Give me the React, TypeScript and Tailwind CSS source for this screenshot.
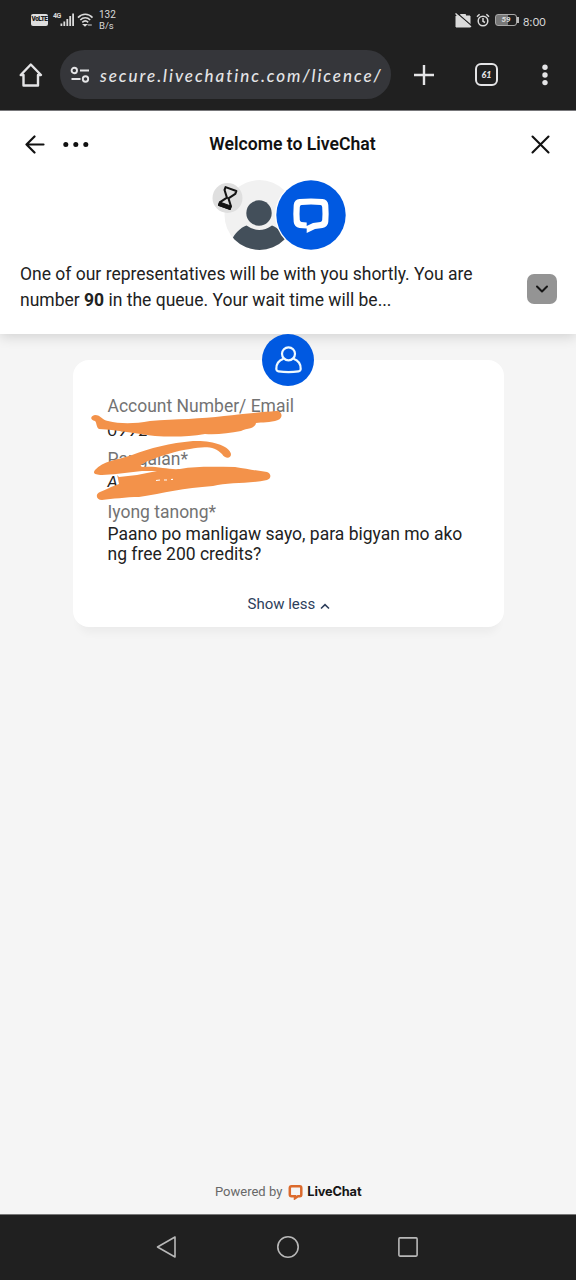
function StatusBar() {
  return (
    <div className="flex h-10 items-center justify-between pl-[31px] pr-[30px] text-[#dadada]">
      <div className="flex h-full items-center">
        <span className="flex h-[12px] w-[17px] shrink-0 items-center justify-center rounded-[2px] bg-[#dedede] text-[6.5px] font-black tracking-[-0.5px] text-[#202020]">
          VoLTE
        </span>
        <span className="mb-[8px] ml-[5px] w-[8px] text-[7px] font-bold leading-none tracking-[-0.5px]">4G</span>
        <svg className="-ml-[1px]" width="15" height="14" viewBox="0 0 15 14" fill="currentColor">
          <rect x="0.5" y="10.5" width="1.8" height="2.5" />
          <rect x="3.4" y="8.5" width="1.8" height="4.5" />
          <rect x="6.4" y="6" width="1.8" height="7" />
          <rect x="9.3" y="3" width="1.8" height="10" />
          <rect x="12.2" y="0.5" width="1.8" height="12.5" />
        </svg>
        <svg className="ml-[2px]" width="17" height="14" viewBox="0 0 17 14" fill="none" stroke="currentColor" strokeWidth="1.6">
          <path d="M1 4.600C5 .2 11.500 .2 15.500 4.600" />
          <path d="M3.300 7C6.200 4 10.300 4 13.200 7" />
          <path d="M5.300 9.300C7.200 7.500 9.300 7.500 11.200 9.300" />
          <path d="M6.500 11.500h3l-1.500 1.500zM10.800 12h4" strokeWidth="1.200" />
        </svg>
        <div className="ml-[5px] text-[10px] leading-[11px]">
          <div>132</div>
          <div className="text-[9.5px]">B/s</div>
        </div>
      </div>
      <div className="flex items-center">
        <svg width="17" height="15" viewBox="0 0 17 15">
          <path d="M5.500 3V1.500h5V3M1 3h14v11H1z" fill="currentColor" stroke="currentColor" strokeWidth="1" />
          <path d="M2.500 .5l14.500 12.500" stroke="#202020" strokeWidth="1.300" />
          <path d="M.5 .5l15.500 13.500" stroke="currentColor" strokeWidth="1.400" />
        </svg>
        <svg className="ml-[4px]" width="15" height="15" viewBox="0 0 15 15" fill="none" stroke="currentColor" strokeWidth="1.500">
          <circle cx="7" cy="8" r="4.800" />
          <path d="M7 5v3.300l2 1.200M1 3.800l2.600-2.500M13 3.800l-2.600-2.500" />
        </svg>
        <div className="ml-[4px] flex items-center">
          <div className="flex h-[12px] w-[22px] items-center justify-center rounded-[3px] border border-[#a8a8a8] bg-linear-to-r from-[#777] from-58% to-[#202020] to-58% text-[8px] font-bold italic leading-none">
            59
          </div>
          <div className="h-[6px] w-[2px] bg-[#bbb]" />
        </div>
        <span className="ml-[4px] pt-[2px] font-['Lato'] text-[11px] leading-none tracking-[0.3px]">8:00</span>
      </div>
    </div>
  );
}

function BrowserBar() {
  return (
    <div className="flex h-[70px] items-center pb-[1px] pl-[19px] text-[#e4e4e6]">
      <svg width="24" height="26" viewBox="0 0 24 26" fill="none" stroke="currentColor" strokeWidth="2.400" strokeLinejoin="round" strokeLinecap="round">
        <path d="M1.700 13L11.800 2.500L22 13H19v10.500H4.500V13z" />
      </svg>
      <div className="ml-[17px] flex h-[49px] w-[331px] items-center rounded-full bg-[#35363a] pl-[10px]">
        <svg width="21" height="18" viewBox="0 0 21 18" fill="none" stroke="currentColor" strokeWidth="1.900">
          <circle cx="4.300" cy="4.500" r="2.700" />
          <path d="M10 4.500h9M1.500 13h9" />
          <circle cx="15.500" cy="13" r="2.700" />
        </svg>
        <span className="ml-[9px] whitespace-nowrap pt-[2px] font-['Lato'] text-[17px] font-medium italic leading-6 tracking-[1.950px]">
          secure.livechatinc.com/licence/
        </span>
      </div>
      <svg className="ml-[22px]" width="22" height="22" viewBox="0 0 22 22" stroke="currentColor" strokeWidth="2.400">
        <path d="M11 1v20M1 11h20" />
      </svg>
      <div className="ml-[40px] flex h-[23px] w-[23px] items-center justify-center rounded-[6px] border-[2.4px] border-[#e4e4e6] font-['Lato'] text-[9px] font-black italic leading-none">
        61
      </div>
      <svg className="ml-[44px]" width="6" height="22" viewBox="0 0 6 22" fill="currentColor">
        <circle cx="3" cy="3.200" r="2.700" />
        <circle cx="3" cy="11" r="2.700" />
        <circle cx="3" cy="18.600" r="2.700" />
      </svg>
    </div>
  );
}

function Avatars() {
  return (
    <svg width="136" height="72" viewBox="0 0 136 72">
      <clipPath id="agent">
        <circle cx="47.500" cy="35" r="35" />
      </clipPath>
      <g clipPath="url(#agent)">
        <rect width="100" height="72" fill="#f1f1f1" />
        <circle cx="47" cy="33" r="12.700" fill="#434f5a" />
        <path d="M19 61C23 53 28 48 34.500 45.500Q47 54.500 60 45.500C66 47.500 71 53 75 61V72H19z" fill="#434f5a" />
      </g>
      <circle cx="15.500" cy="18" r="15" fill="#dfdfdf" />
      <g transform="translate(15.700 18) rotate(20)" fill="none" stroke="#141414" strokeWidth="2.100" strokeLinejoin="round">
        <path d="M-5.700-9.500H5.700V-6.500L.8 0L5.700 6.500V9.500H-5.700V6.500L-.8 0L-5.700-6.500z" />
        <path d="M-6.200 6.500H6.200V10H-6.200z" fill="#141414" strokeWidth="1" />
      </g>
      <circle cx="99" cy="35" r="36" fill="#fff" />
      <circle cx="99" cy="35" r="34.700" fill="#0059e1" />
      <path
        fillRule="evenodd"
        fill="#fff"
        d="M87.500 19Q99 18 110.500 19Q115.700 19.500 116.300 25Q117 33.500 116.300 42Q115.700 46.800 110.500 48L103 49L94.700 53V48.500L87.500 48Q82.300 47 81.700 42Q81 33.500 81.700 25Q82.300 19.500 87.500 19zM89.500 25Q99 24.200 108.500 25Q110 25.200 110.200 27Q110.700 33.500 110.200 40Q110 41.700 108.500 42L101 43L94.700 46V42.500L89.500 42Q88 41.700 87.800 40Q87.300 33.500 87.800 27Q88 25.200 89.500 25z"
      />
    </svg>
  );
}

function ChatHeader() {
  return (
    <header className="relative h-[224px] border-t border-[#77777a] bg-white shadow-[0_3px_12px_rgba(0,0,0,0.14)]">
      <div className="flex h-[66px] items-center pl-[25px] pr-[26px] text-[#111]">
        <svg width="20" height="20" viewBox="0 0 20 20" fill="none" stroke="currentColor" strokeWidth="2.200" strokeLinecap="round" strokeLinejoin="round">
          <path d="M18.500 10.500H1.500M9.500 2.500L1.500 10.500l8 8" />
        </svg>
        <svg className="ml-[18px]" width="26" height="6" viewBox="0 0 26 6" fill="currentColor">
          <circle cx="2.800" cy="3.500" r="2.500" />
          <circle cx="12.800" cy="3.500" r="2.500" />
          <circle cx="22.800" cy="3.500" r="2.500" />
        </svg>
        <h1 className="flex-1 pl-[50px] pr-[85px] text-center">
          <span className="whitespace-nowrap text-[17.6px] font-semibold leading-6">Welcome to LiveChat</span>
        </h1>
        <svg width="19" height="19" viewBox="0 0 19 19" stroke="currentColor" strokeWidth="2.100" strokeLinecap="round">
          <path d="M1.500 1.500l16 16M17.500 1.500l-16 16" />
        </svg>
      </div>
      <div className="ml-[212px] mt-[3px] h-[72px]">
        <Avatars />
      </div>
      <div className="mt-[9px] flex items-start justify-between pl-5 pr-[19px]">
        <p className="w-[480px] text-[17.5px] leading-[26px] text-[#222]">
          One of our representatives will be with you shortly. You are
          <br />
          number <b>90</b> in the queue. Your wait time will be...
        </p>
        <button className="mt-[13px] flex h-[30px] w-[30px] items-center justify-center rounded-[7px] bg-[#949494]">
          <svg width="14" height="9" viewBox="0 0 14 9" fill="none" stroke="#151515" strokeWidth="2" strokeLinecap="round" strokeLinejoin="round">
            <path d="M2 1.500l5 5 5-5" />
          </svg>
        </button>
      </div>
    </header>
  );
}

// Hand-drawn marker strokes that hide the private answers
function Redaction() {
  return (
    <svg className="absolute left-[13px] top-[45px]" width="200" height="100" viewBox="86 405 200 100" fill="#f3924a">
      <path d="M95 415C101 415 102 420 108 421C120 424 134 424 150 421C176 419 202 419 224 416C242 414 262 412 276 411C283 411 283 418 278 420C270 423 262 422 256 423C255 429 247 428 241 431C229 433 217 435 205 434C188 437 171 437 155 436C139 434 119 430 99 429C96 427 97 423 95 421C90 420 90 416 95 415z" />
      <path d="M95 470C103 461 117 460 132 455C150 448 170 443 193 441C212 440 230 446 231 454C231 459 225 459 222 454C215 446 204 446 190 449C178 450 158 457 148 461C142 464 138 466 143 467C158 466 168 470 180 469C197 466 215 467 235 467C248 469 258 471 267 472C272 474 271 479 267 480C248 484 228 482 213 486C183 488 164 493 139 497C126 497 112 499 102 500C96 500 95 494 100 492C104 490 108 489 111 487L119 484L117 474L102 475C96 475 92 474 95 470z" />
      <path d="M116 474L142 471L157 471L137 475L119 477z" fill="#fff" />
      <path d="M156 480.500l4-.5M164 480h3M171 479.500l2-.2" stroke="#fff" strokeWidth="1.200" />
    </svg>
  );
}

function PreChatCard() {
  return (
    <section className="relative mx-auto mt-[26px] h-[267px] w-[431px] rounded-[16px] bg-white shadow-[0_12px_8px_-6px_rgba(0,0,0,0.04)]">
      <div className="absolute -top-[26px] left-[189px] flex h-[52px] w-[52px] items-center justify-center rounded-full bg-[#0059e1]">
        <svg width="28" height="28" viewBox="0 0 28 28" fill="none" stroke="#effaff" strokeWidth="2.200">
          <circle cx="14.500" cy="7.800" r="6.500" />
          <path d="M9.500 12.800C4.500 14.500 2.200 18.500 2.300 23Q2.500 25 4.500 25.300Q14.500 26.800 24.500 25.300Q26.500 25 26.700 23C26.800 18.500 24.500 14.500 19.500 12.800" />
        </svg>
      </div>
      <dl className="pl-[35px] pt-[36px] text-[17.5px] leading-5">
        <dt className="text-[#737373]">Account Number/ Email</dt>
        <dd className="h-[33px] pt-1 font-['Lato'] text-[16px] tracking-[1px] text-[#222]">0992</dd>
        <dt className="text-[#737373]">Pangalan*</dt>
        <dd className="h-[33px] pt-[2px] font-['Lato'] text-[16px] italic text-[#222]">A</dd>
        <dt className="text-[#737373]">Iyong tanong*</dt>
        <dd className="mt-[2px] text-[#222]">
          Paano po manligaw sayo, para bigyan mo ako
          <br />
          ng free 200 credits?
        </dd>
      </dl>
      <button className="ml-[175px] mt-[30px] flex items-center text-[15px] leading-5 text-[#2d3e5b]">
        <span>Show less</span>
        <svg className="ml-[5px] mt-[4px]" width="10" height="7" viewBox="0 0 10 7" fill="none" stroke="currentColor" strokeWidth="1.600">
          <path d="M1 5.500L5 1.700l4 3.800" />
        </svg>
      </button>
      <Redaction />
    </section>
  );
}

function NavBar() {
  return (
    <nav className="flex h-[66px] items-center border-t border-[#777] bg-[#202020] pb-[1px] pl-[156px]">
      <svg width="22" height="24" viewBox="0 0 22 24" fill="none" stroke="#b8b8b8" strokeWidth="1.600" strokeLinejoin="round">
        <path d="M1.500 12L19 2v20z" />
      </svg>
      <svg className="ml-[98px]" width="24" height="24" viewBox="0 0 24 24" fill="none" stroke="#b8b8b8" strokeWidth="1.600">
        <circle cx="12" cy="12" r="10.200" />
      </svg>
      <svg className="ml-[98px]" width="20" height="20" viewBox="0 0 20 20" fill="none" stroke="#b8b8b8" strokeWidth="1.600">
        <rect x="0.900" y="0.900" width="18.200" height="18.200" rx="1" />
      </svg>
    </nav>
  );
}

export default function App() {
  return (
    <div className="flex h-[1280px] w-[576px] flex-col overflow-hidden bg-[#f5f5f5] font-['Roboto',sans-serif]">
      <div className="relative z-10 h-[110px] bg-[#202020]">
        <StatusBar />
        <BrowserBar />
      </div>
      <ChatHeader />
      <main className="flex-1">
        <PreChatCard />
      </main>
      <footer className="mb-[12px] flex h-5 items-center pl-[215px] text-[13px] leading-5 text-[#686868]">
        <span>Powered by</span>
        <svg className="ml-[6px]" width="15" height="16" viewBox="0 0 15 16" fill="none" stroke="#dc6a2c" strokeWidth="2.500">
          <path d="M3.500 2.200h8.300q1.500 0 1.500 1.800v6.500q0 1.700-1.500 1.700H10l-3 2v-2H3.500q-1.700 0-1.700-1.700V4q0-1.800 1.700-1.800z" />
        </svg>
        <span className="ml-1 font-['Inter'] text-[12.8px] font-bold tracking-[-0.15px] text-[#161616]">LiveChat</span>
      </footer>
      <NavBar />
    </div>
  );
}
